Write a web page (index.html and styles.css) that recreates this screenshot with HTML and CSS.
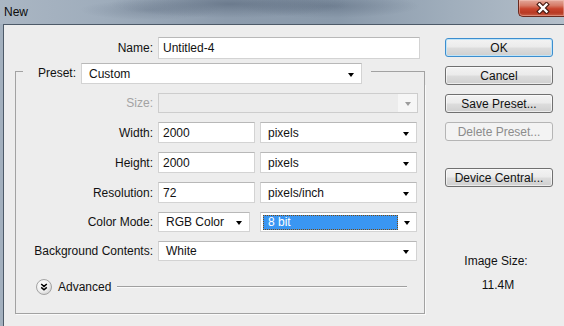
FILE: index.html
```html
<!DOCTYPE html>
<html>
<head>
<meta charset="utf-8">
<link rel="stylesheet" href="styles.css">
</head>
<body>
<div class="window">
  <div class="titlebar">
    <span class="title">New</span>
    <div class="close">
      <svg width="14" height="12" viewBox="0 0 14 12">
        <path d="M3.5 2.5 L10.5 9.5 M10.5 2.5 L3.5 9.5" stroke="#4a1c14" stroke-width="4.6" stroke-linecap="square" fill="none"/>
        <path d="M3.5 2.5 L10.5 9.5 M10.5 2.5 L3.5 9.5" stroke="#ffffff" stroke-width="2.4" stroke-linecap="square" fill="none"/>
      </svg>
    </div>
  </div>
  <div class="client">
    <div class="main">
      <div class="name-row">
        <span class="lbl name-lbl">Name:</span>
        <div class="input name-input">Untitled-4</div>
      </div>
      <div class="group">
        <div class="group-head">
          <span class="corner-l"></span>
          <span class="preset-lbl">Preset:</span>
          <div class="select preset-select"><span class="val">Custom</span><span class="arrow"></span></div>
          <span class="corner-r"></span>
        </div>
        <div class="group-body">
          <div class="form">
            <div class="row h20">
              <span class="lbl dis">Size:</span>
              <div class="select disabled w260"><span class="val"></span><span class="arrow-box"><span class="arrow grey"></span></span></div>
            </div>
            <div class="row h21">
              <span class="lbl">Width:</span>
              <div class="input w97">2000</div>
              <div class="select w157"><span class="val">pixels</span><span class="arrow"></span></div>
            </div>
            <div class="row h21">
              <span class="lbl">Height:</span>
              <div class="input w97">2000</div>
              <div class="select w157"><span class="val">pixels</span><span class="arrow"></span></div>
            </div>
            <div class="row h21">
              <span class="lbl">Resolution:</span>
              <div class="input w97">72</div>
              <div class="select w157"><span class="val">pixels/inch</span><span class="arrow"></span></div>
            </div>
            <div class="row h20">
              <span class="lbl">Color Mode:</span>
              <div class="select w92"><span class="val">RGB Color</span><span class="arrow"></span></div>
              <div class="select w157 focus"><span class="val hl">8 bit</span><span class="arrow"></span></div>
            </div>
            <div class="row h20">
              <span class="lbl">Background Contents:</span>
              <div class="select w259"><span class="val">White</span><span class="arrow"></span></div>
            </div>
          </div>
          <div class="advanced">
            <svg class="adv-icon" width="16" height="16" viewBox="0 0 16 16">
              <defs>
                <radialGradient id="g" cx="0.4" cy="0.35" r="0.7">
                  <stop offset="0" stop-color="#ffffff"/>
                  <stop offset="0.6" stop-color="#f0f0f0"/>
                  <stop offset="1" stop-color="#cfcfcf"/>
                </radialGradient>
              </defs>
              <circle cx="8" cy="8" r="7.5" fill="url(#g)" stroke="#a4a4a4"/>
              <path d="M5.2 5 L8 7.4 L10.8 5 M5.2 8.4 L8 10.8 L10.8 8.4" stroke="#000" stroke-width="1.5" fill="none"/>
            </svg>
            <span class="adv-text">Advanced</span>
            <span class="adv-line"></span>
          </div>
        </div>
      </div>
    </div>
    <div class="side">
      <div class="btn default">OK</div>
      <div class="btn">Cancel</div>
      <div class="btn">Save Preset...</div>
      <div class="btn disabled-btn">Delete Preset...</div>
      <div class="btn device">Device Central...</div>
      <div class="info">
        <div class="info-label">Image Size:</div>
        <div class="info-value">11.4M</div>
      </div>
    </div>
  </div>
</div>
</body>
</html>
```

FILE: styles.css
```css
html, body {
  margin: 0;
  padding: 0;
}
body {
  width: 564px;
  height: 326px;
  overflow: hidden;
  font-family: "Liberation Sans", Arial, sans-serif;
  font-size: 12px;
  color: #111;
  background: #a3b0be;
}
.window {
  display: flex;
  flex-direction: column;
  height: 326px;
}
.titlebar {
  height: 24px;
  display: flex;
  align-items: flex-start;
  background:
    radial-gradient(ellipse 120px 14px at 230px 4px, rgba(80,95,115,0.55), rgba(80,95,115,0)),
    radial-gradient(ellipse 90px 12px at 330px 6px, rgba(85,100,120,0.45), rgba(85,100,120,0)),
    radial-gradient(ellipse 70px 10px at 150px 10px, rgba(95,110,130,0.35), rgba(95,110,130,0)),
    linear-gradient(90deg, #aab6c3 0%, #9fadbc 18%, #8d9cad 40%, #8a9aab 60%, #a0aebc 80%, #b4bfca 100%);
}
.title {
  padding: 5px 0 0 4px;
  line-height: 14px;
  color: #0c0c0c;
}
.close {
  margin-left: auto;
  width: 46px;
  height: 17px;
  box-sizing: border-box;
  border: 1px solid #6a2a1f;
  border-top: none;
  border-right: none;
  border-radius: 0 0 0 5px;
  background: linear-gradient(180deg, #e4a89b 0%, #d67a66 35%, #c8442d 55%, #b83a24 80%, #c9614a 100%);
  box-shadow: inset 0 0 0 1px rgba(255,220,210,0.35);
  display: flex;
  align-items: center;
  justify-content: center;
  padding-left: 2px;
}
.client {
  flex: 1;
  margin-left: 3px;
  border-left: 1px solid #4d5a68;
  border-top: 1px solid #4d5a68;
  background: #ededed;
  display: flex;
}
.main {
  padding: 12px 0 0 11px;
  width: 410px;
  flex: none;
}
.name-row {
  display: flex;
  align-items: center;
  gap: 5px;
  height: 22px;
}
.lbl {
  text-align: right;
  white-space: nowrap;
}
.name-lbl {
  width: 138px;
}
.input {
  box-sizing: border-box;
  height: 100%;
  background: #fff;
  border: 1px solid #d3d3d3;
  border-top-color: #b8b8b8;
  padding: 0 4px;
  display: flex;
  align-items: center;
  white-space: nowrap;
}
.name-input {
  width: 262px;
}
.group {
  margin-top: 4px;
}
.group-head {
  display: flex;
  align-items: flex-start;
  height: 21px;
}
.corner-l {
  width: 7px;
  align-self: stretch;
  margin-top: 8px;
  border-left: 1px solid #a2a2a2;
  border-top: 1px solid #a2a2a2;
}
.corner-r {
  flex: 1;
  align-self: stretch;
  margin-top: 8px;
  margin-left: 9px;
  border-right: 1px solid #a2a2a2;
  border-top: 1px solid #a2a2a2;
}
.preset-lbl {
  margin-left: 15px;
  margin-right: 5px;
  line-height: 21px;
  white-space: nowrap;
}
.select {
  box-sizing: border-box;
  height: 100%;
  background: #fff;
  border: 1px solid #d3d3d3;
  border-top-color: #b8b8b8;
  padding: 0 7px 0 7px;
  display: flex;
  align-items: center;
  white-space: nowrap;
}
.preset-select {
  width: 281px;
  height: 21px;
}
.select .val {
  flex: 1;
}
.arrow {
  width: 0;
  height: 0;
  border-left: 3.5px solid transparent;
  border-right: 3.5px solid transparent;
  border-top: 4px solid #000;
  margin-top: 2px;
}
.arrow.grey {
  border-top-color: #9c9c9c;
}
.group-body {
  border-left: 1px solid #a2a2a2;
  border-right: 1px solid #a2a2a2;
  border-bottom: 1px solid #a2a2a2;
  padding: 9px 6px 18px 0;
  box-shadow: 1px 1px 0 #fafafa;
}
.form {
  display: flex;
  flex-direction: column;
  gap: 9px;
}
.row {
  display: flex;
  align-items: center;
  gap: 5px;
}
.row .lbl {
  width: 137px;
}
.h20 { height: 20px; }
.h21 { height: 21px; }
.dis {
  color: #a3a3a3;
}
.select.disabled {
  background: #ececec;
  border-color: #cdcdcd;
  padding: 0;
}
.arrow-box {
  width: 19px;
  height: 100%;
  background: #f6f6f6;
  display: flex;
  align-items: center;
  justify-content: center;
}
.w260 { width: 260px; }
.w259 { width: 259px; }
.w157 { width: 157px; }
.w97 { width: 97px; }
.w92 { width: 92px; margin-right: 5px; }
.select.focus {
  padding-left: 2px;
}
.val.hl {
  flex: none;
  width: 135px;
  height: 15px;
  box-sizing: border-box;
  background: #3a96f2;
  color: #fff;
  border: 1px dotted #7a4a10;
  padding-left: 4px;
  line-height: 13px;
  margin-right: 6px;
}
.advanced {
  margin-top: 18px;
  height: 16px;
  display: flex;
  align-items: center;
  padding-left: 20px;
  margin-right: 11px;
}
.adv-icon {
  flex: none;
}
.adv-text {
  margin-left: 6px;
}
.adv-line {
  flex: 1;
  margin-left: 6px;
  height: 0;
  border-top: 1px solid #a0a0a0;
  border-bottom: 1px solid #fafafa;
}
.side {
  margin-left: 20px;
  width: 108px;
  padding-top: 13px;
  display: flex;
  flex-direction: column;
}
.btn {
  box-sizing: border-box;
  height: 19px;
  margin-bottom: 9px;
  border: 1px solid #707070;
  border-radius: 3px;
  background: linear-gradient(180deg, #f3f3f3 0%, #ebebeb 48%, #dddddd 52%, #cfcfcf 100%);
  box-shadow: inset 0 0 0 1px rgba(255,255,255,0.6);
  display: flex;
  align-items: center;
  justify-content: center;
  white-space: nowrap;
  color: #111;
}
.btn.default {
  border-color: #3c8ecf;
  box-shadow: inset 0 0 0 1px #bfe4f8;
}
.btn.disabled-btn {
  border-color: #b5b5b5;
  background: #f3f3f3;
  box-shadow: none;
  color: #8c8c8c;
}
.btn.device {
  margin-top: 18px;
}
.info {
  margin-top: 58px;
  display: flex;
  flex-direction: column;
  align-items: center;
  padding-right: 6px;
}
.info-label {
  line-height: 14px;
}
.info-value {
  margin-top: 10px;
  line-height: 14px;
  padding-left: 4px;
}
```
